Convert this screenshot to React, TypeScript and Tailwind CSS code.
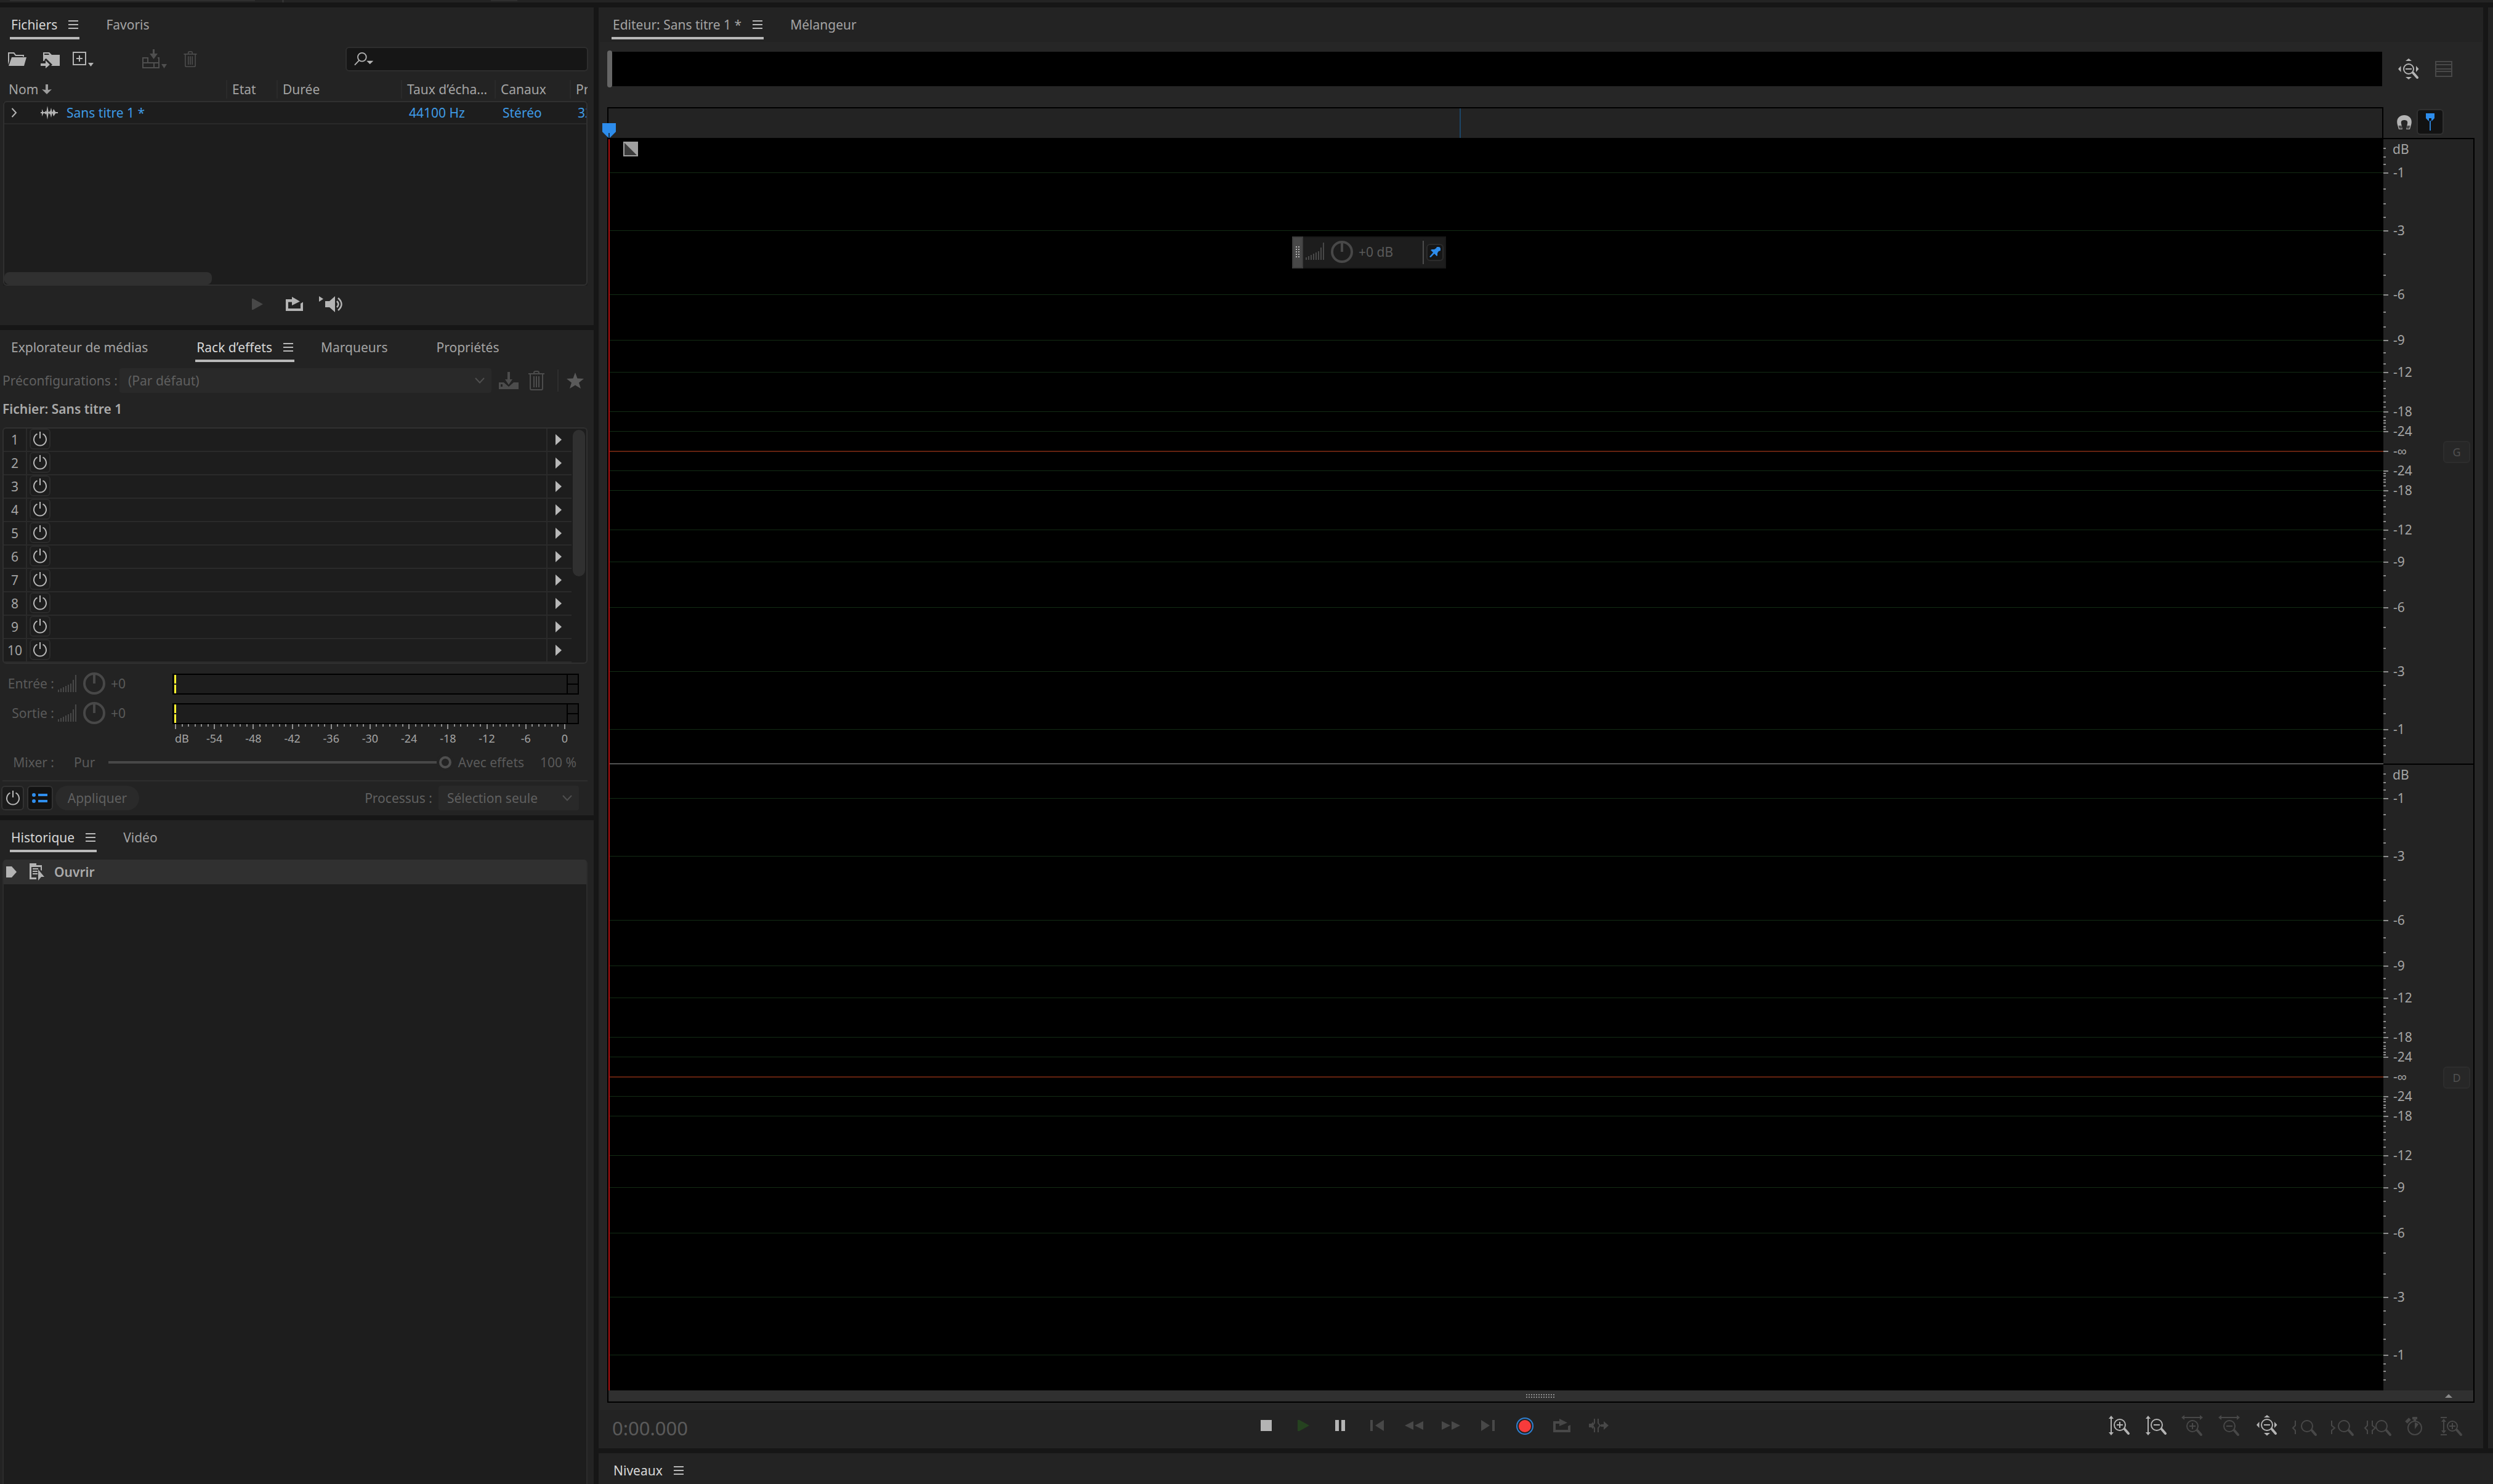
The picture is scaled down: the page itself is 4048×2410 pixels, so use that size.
import type { ReactNode } from "react";

/* ---------- shared pieces ---------- */

function Burger() {
  return (
    <svg width="16" height="14" viewBox="0 0 16 14" fill="currentColor" aria-hidden="true">
      <path d="M0 0h16v2H0zM0 6h16v2H0zM0 12h16v2H0z" />
    </svg>
  );
}

function Tab({ label, active = false, bright = false, underline = true }: { label: string; active?: boolean; bright?: boolean; underline?: boolean }) {
  return (
    <button
      type="button"
      className={`flex items-center gap-[18px] border-b-4 px-[2px] pb-[6px] leading-[28px] ${
        active && underline ? "border-[#b9b9b9]" : "border-transparent"
      } ${bright ? "text-[#d8d8d8]" : "text-[#a4a4a4]"}`}
    >
      <span>{label}</span>
      <span className={active ? "text-[#b9b9b9]" : "invisible"}>
        <Burger />
      </span>
    </button>
  );
}

function TabBar({ children, wide = false }: { children: ReactNode; wide?: boolean }) {
  return <nav className={`flex gap-[41px] pt-[14px] ${wide ? "pl-[21px]" : "pl-4"}`}>{children}</nav>;
}

function IconButton({ label, className = "", children }: { label: string; className?: string; children: ReactNode }) {
  return (
    <button type="button" aria-label={label} className={`flex shrink-0 items-center justify-center ${className}`}>
      {children}
    </button>
  );
}

function PowerIcon() {
  return (
    <svg width="24" height="26" viewBox="0 0 24 26" fill="none" stroke="#b8b8b8" strokeWidth="2" aria-hidden="true">
      <path d="M12 1v11M7.5 4.6a10 10 0 1 0 9 0" />
    </svg>
  );
}

function LevelBars() {
  return (
    <svg width="30" height="28" viewBox="0 0 30 28" fill="#484848" aria-hidden="true">
      <path d="M0 24h2v4H0zM4 22h2v6H4zM8 20h2v8H8zM12 18h2v10h-2zM16 16h2v12h-2zM20 14h2v14h-2zM24 8h2v20h-2zM28 0h2v28h-2z" />
    </svg>
  );
}

function Knob() {
  return (
    <svg width="36" height="36" viewBox="0 0 36 36" fill="none" stroke="#484848" strokeWidth="4" aria-hidden="true">
      <circle cx="18" cy="18" r="16" />
      <path d="M18 2v16" />
    </svg>
  );
}

function Chevron() {
  return (
    <svg width="16" height="10" viewBox="0 0 16 10" fill="none" stroke="#4f4f4f" strokeWidth="2" aria-hidden="true">
      <path d="M1 1l7 7.5L15 1" />
    </svg>
  );
}

function Dropdown({ id, value, className }: { id: string; value: string; className: string }) {
  return (
    <div className={`relative h-10 ${className}`}>
      <select id={id} className="h-full w-full appearance-none rounded bg-[#292929] pl-[14px] pr-10 text-[#606060]">
        <option>{value}</option>
      </select>
      <span className="pointer-events-none absolute right-[11px] top-[15px]">
        <Chevron />
      </span>
    </div>
  );
}

function TrashIcon() {
  return (
    <svg width="26" height="32" viewBox="0 0 26 32" fill="none" stroke="#4c4c4c" strokeWidth="2" aria-hidden="true">
      <path d="M0 5h26M9 5V3.5Q9 1 11.500 1h3Q17 1 17 3.500V5M3 5v23.500Q3 31 5 31h16q2 0 2-2.500V5M9 9v18M13 9v18M17 9v18" />
    </svg>
  );
}

function LoopIcon({ color }: { color: string }) {
  return (
    <svg width="28" height="24" viewBox="0 0 28 24" fill={color} aria-hidden="true">
      <path d="M0 4h10V0l13 7.500L10 14V8.500H4V19h20v-8l4-2.500V23H0z" />
    </svg>
  );
}

/* ---------- files panel ---------- */

function FilesPanel() {
  const columns: [string, string][] = [
    ["Nom", "w-[362px]"],
    ["Etat", "w-[82px]"],
    ["Durée", "w-[202px]"],
    ["Taux d’écha...", "w-[152px]"],
    ["Canaux", "w-[122px]"],
    ["Précision", ""],
  ];
  return (
    <section className="bg-[#232323]">
      <TabBar>
        <Tab label="Fichiers" active bright />
        <Tab label="Favoris" />
      </TabBar>
      <div className="mt-3 flex h-10 items-center pl-[13px] pr-[9px]">
        <IconButton label="Ouvrir un fichier">
          <svg width="30" height="22" viewBox="0 0 30 22" fill="#b4b4b4" aria-hidden="true">
            <path d="M0 20V0h10l3 4h13v3h-2V6H12L9 2H2v12z" />
            <path d="M6 8h24l-4 14H1z" />
          </svg>
        </IconButton>
        <IconButton label="Importer un fichier" className="ml-[22px] mt-1">
          <svg width="34" height="26" viewBox="0 0 34 26" fill="#b4b4b4" aria-hidden="true">
            <path d="M5 0h10l4 4h13v18H18l2-2-10-10-2 1-1 3H5zM7 2v2h8l-1-2z" fillRule="evenodd" />
            <path d="M1 18h8v-5l7 7-7 6v-4H1z" />
          </svg>
        </IconButton>
        <IconButton label="Nouveau fichier" className="ml-[18px]">
          <svg width="36" height="26" viewBox="0 0 36 26" fill="none" aria-hidden="true">
            <path d="M2 2h20v20H2zM12 7v10M7 12h10" stroke="#b4b4b4" strokeWidth="2" />
            <path d="M26 19h9l-4.500 6z" fill="#b4b4b4" />
          </svg>
        </IconButton>
        <IconButton label="Insérer dans un fichier multipiste" className="ml-[78px]">
          <svg width="40" height="32" viewBox="0 0 40 32" aria-hidden="true">
            <path d="M10 14H1v16h26V14h-2M1 22h26M9 14v8M19 22v8" fill="none" stroke="#4f4f4f" strokeWidth="2" />
            <path d="M17 0h3v7h5l-6.500 9L12 7h5zM31 24h9l-4.500 7z" fill="#4f4f4f" />
          </svg>
        </IconButton>
        <IconButton label="Supprimer" className="ml-[27px]">
          <svg width="22" height="26" viewBox="0 0 26 32" fill="none" stroke="#4c4c4c" strokeWidth="2" aria-hidden="true">
            <path d="M0 6h26M9 5V3.500Q9 1 11.500 1h3Q17 1 17 3.500V5M3 5v23.500Q3 31 5 31h16q2 0 2-2.500V5M9 10v17M13 10v17M17 10v17" />
          </svg>
        </IconButton>
        <label className="ml-auto flex h-10 w-[394px] items-center rounded-md border-2 border-[#2e2e2e] bg-[#161616] pl-3">
          <svg width="34" height="24" viewBox="0 0 34 24" fill="none" aria-hidden="true">
            <circle cx="14" cy="8.500" r="7.500" stroke="#b4b4b4" strokeWidth="2" />
            <path d="M9 14L1 22.500" stroke="#b4b4b4" strokeWidth="2" />
            <path d="M22 15h12l-6 6z" fill="#b4b4b4" />
          </svg>
          <input type="search" aria-label="Rechercher" className="w-full bg-transparent text-[#b4b4b4] outline-none" />
        </label>
      </div>
      <div className="relative ml-[5px] mr-[10px] mt-2 h-[340px] overflow-hidden bg-[#1d1d1d]">
        <table className="w-full table-fixed border-collapse text-left">
          <thead>
            <tr className="h-[41px] bg-[#232323] text-[#a4a4a4]">
              {columns.map(([name, width], i) => (
                <th key={name} className={`overflow-hidden whitespace-nowrap p-0 font-normal ${width}`}>
                  <span
                    className={`flex h-[30px] items-center ${i === 0 ? "gap-[6px] pl-[9px]" : "border-l-2 border-[#2a2a2a] pl-[8px]"}`}
                  >
                    {name}
                    {i === 0 && (
                      <svg width="16" height="16" viewBox="0 0 16 16" fill="#9c9c9c" aria-hidden="true">
                        <path d="M6 0h4v9l6-1-8 8-8-8 6 1z" />
                      </svg>
                    )}
                  </span>
                </th>
              ))}
            </tr>
          </thead>
          <tbody>
            <tr className="h-9 border-b-2 border-[#292929] text-[#3f9be6]">
              <td className="p-0">
                <span className="flex items-center pl-[13px]">
                  <svg width="10" height="16" viewBox="0 0 10 16" fill="none" stroke="#b4b4b4" strokeWidth="2" aria-hidden="true">
                    <path d="M1.500 1L8 8l-6.500 7" />
                  </svg>
                  <svg className="ml-[38px] mr-[14px]" width="28" height="22" viewBox="0 0 28 22" fill="#b4b4b4" aria-hidden="true">
                    <path d="M0 10h28v2H0zM2 5l3 6-3 6zM6 11l2-3 2 3-2 3zM9 11l2-11 2 11-2 11zM13 11l2-3 1 3-1 3zM15 11l2-8 2 8-2 8zM19 11l2-6 4 6-4 6z" />
                  </svg>
                  Sans titre 1 *
                </span>
              </td>
              <td />
              <td />
              <td className="p-0 pl-[13px]">44100 Hz</td>
              <td className="p-0 pl-[13px]">Stéréo</td>
              <td className="overflow-hidden whitespace-nowrap p-0 pl-[13px]">32 (flottant)</td>
            </tr>
          </tbody>
        </table>
        <div className="pointer-events-none absolute inset-x-0 bottom-0 top-10 rounded-md border-2 border-[#303030]" />
        <div className="absolute bottom-[2px] left-[2px] h-5 w-[337px] rounded-[8px] bg-[#303030]" />
      </div>
      <div className="flex h-16 justify-center pb-1 pr-2">
        <IconButton label="Lire" className="w-[60px]">
          <svg width="18" height="18" viewBox="0 0 18 18" fill="#484848" aria-hidden="true">
            <path d="M0 0h2l16 9-16 9H0z" />
          </svg>
        </IconButton>
        <IconButton label="Lecture en boucle" className="w-[60px]">
          <LoopIcon color="#b4b4b4" />
        </IconButton>
        <IconButton label="Lecture automatique" className="w-[60px]">
          <svg width="40" height="26" viewBox="0 0 40 26" aria-hidden="true">
            <path d="M0 0l7 4.500L0 9zM10 8h7l9-8v26l-9-8h-7z" fill="#b4b4b4" />
            <path d="M29 8q5 5 0 10M31 3q11 10 0 20" fill="none" stroke="#b4b4b4" strokeWidth="2.500" />
          </svg>
        </IconButton>
      </div>
    </section>
  );
}

/* ---------- effects rack panel ---------- */

const slots = [1, 2, 3, 4, 5, 6, 7, 8, 9, 10];
const meterLabels = ["dB", "-54", "-48", "-42", "-36", "-30", "-24", "-18", "-12", "-6", "0"];
const meterTicks = Array.from({ length: 61 }, (_, i) => i);

function GainRow({ label }: { label: string }) {
  return (
    <div className="flex h-9 items-center text-[#5a5a5a]">
      <span className="w-[88px] whitespace-nowrap text-right">{label}</span>
      <span className="ml-[6px]">
        <LevelBars />
      </span>
      <span className="ml-[11px]">
        <Knob />
      </span>
      <span className="ml-[9px] w-[100px]">+0</span>
      <div className="mr-6 flex h-[34px] flex-1 self-end border-2 border-black bg-[#1d1d1d]">
        <div className="ml-[1px] flex w-[3px] flex-col gap-[2px]">
          <div className="flex-1 bg-[#fff22d]" />
          <div className="flex-1 bg-[#fff22d]" />
        </div>
        <div className="ml-auto flex w-[18px] flex-col border-l-2 border-black">
          <div className="flex-1 border-b-2 border-black" />
          <div className="flex-1" />
        </div>
      </div>
    </div>
  );
}

function EffectsPanel() {
  return (
    <section className="bg-[#232323] pb-2">
      <TabBar>
        <Tab label="Explorateur de médias" />
        <Tab label="Rack d’effets" active bright />
        <Tab label="Marqueurs" />
        <Tab label="Propriétés" />
      </TabBar>
      <div className="mt-[10px] flex h-10 items-center pl-[4px] pr-4">
        <label htmlFor="preset" className="w-[190px] shrink-0 whitespace-nowrap text-[#606060]">
          Préconfigurations :
        </label>
        <Dropdown id="preset" value="(Par défaut)" className="flex-1" />
        <IconButton label="Enregistrer la préconfiguration" className="ml-3">
          <svg width="32" height="28" viewBox="0 0 32 28" fill="#4c4c4c" aria-hidden="true">
            <path d="M0 17h8l8 7 8-7h8v11H0zM3 20v4h3v-4z" fillRule="evenodd" />
            <path d="M14 0h4v12h4l-6 9-6-9h4z" />
          </svg>
        </IconButton>
        <IconButton label="Supprimer la préconfiguration" className="ml-4">
          <TrashIcon />
        </IconButton>
        <div className="ml-[21px] h-9 w-[2px] bg-[#2e2e2e]" />
        <IconButton label="Favori" className="ml-[13px]">
          <svg width="28" height="26" viewBox="0 0 28 26" fill="#5a5a5a" aria-hidden="true">
            <path d="M14 0l3.500 9.500L28 10l-8 6.500L23 26l-9-5.500L5 26l3-9.500L0 10l10.500-.5z" />
          </svg>
        </IconButton>
      </div>
      <h2 className="mt-3 pl-[4px] font-semibold leading-[28px] text-[#aaaaaa]">Fichier: Sans titre 1</h2>
      <div className="ml-[4px] mr-[10px] mt-4 flex rounded-md border-2 border-[#303030] bg-[#1d1d1d]">
        <ol className="flex-1">
          {slots.map((n) => (
            <li key={n} className="flex h-[38px] border-b-2 border-[#2a2a2a] text-[#a4a4a4]">
              <span className="w-[38px] border-r-2 border-[#2a2a2a] text-center leading-[36px]">{n}</span>
              <IconButton label={`Activer l’effet ${n}`} className="ml-[4px] h-[34px] w-[34px] rounded-md border-2 border-[#2b2b2b]">
                <PowerIcon />
              </IconButton>
              <span className="flex-1" />
              <IconButton label={`Choisir l’effet ${n}`} className="w-[41px] border-l-2 border-[#2a2a2a] pr-[3px]">
                <svg width="10" height="18" viewBox="0 0 10 18" fill="#b8b8b8" aria-hidden="true">
                  <path d="M0 0l10 9L0 18z" />
                </svg>
              </IconButton>
            </li>
          ))}
        </ol>
        <div className="mx-[2px] mt-[2px] h-[238px] w-5 rounded-full bg-[#303030]" />
      </div>
      <div className="mt-[14px] flex flex-col gap-3">
        <GainRow label="Entrée :" />
        <GainRow label="Sortie :" />
      </div>
      <div className="ml-[284px] mr-[46px]">
        <div className="flex h-2 justify-between">
          {meterTicks.map((i) => (
            <span key={i} className={`w-[2px] bg-[#8f8f8f] ${i % 6 === 0 ? "h-2" : "h-1"}`} />
          ))}
        </div>
        <div className="mt-[3px] flex justify-between text-[18px] leading-[24px] text-[#a4a4a4]">
          {meterLabels.map((t, i) => (
            <span key={t} className={`flex w-[2px] ${i === 0 ? "justify-start" : "justify-center"}`}>
              {t}
            </span>
          ))}
        </div>
      </div>
      <div className="mt-[11px] flex h-8 items-center whitespace-nowrap pr-[28px] text-[#5a5a5a]">
        <label htmlFor="mix" className="w-[88px] text-right">
          Mixer :
        </label>
        <span className="ml-8 w-[56px]">Pur</span>
        <input
          id="mix"
          type="range"
          defaultValue={100}
          className="h-5 flex-1 appearance-none bg-transparent [&::-webkit-slider-runnable-track]:h-1 [&::-webkit-slider-runnable-track]:bg-[#484848] [&::-webkit-slider-thumb]:-mt-2 [&::-webkit-slider-thumb]:h-5 [&::-webkit-slider-thumb]:w-5 [&::-webkit-slider-thumb]:appearance-none [&::-webkit-slider-thumb]:rounded-full [&::-webkit-slider-thumb]:border-4 [&::-webkit-slider-thumb]:border-[#4f4f4f] [&::-webkit-slider-thumb]:bg-[#232323] [&::-webkit-slider-thumb]:ring-4 [&::-webkit-slider-thumb]:ring-[#232323]"
        />
        <span className="ml-[11px]">Avec effets</span>
        <span className="ml-[26px]">100 %</span>
      </div>
      <div className="ml-1 mr-[10px] mt-[13px] h-[2px] bg-[#2e2e2e]" />
      <div className="mt-[7px] flex h-10 items-center pl-[2px] pr-6 text-[#606060]">
        <IconButton label="Activer le rack" className="h-10 w-[37px] rounded-md border-2 border-[#323232] bg-[#1b1b1b]">
          <PowerIcon />
        </IconButton>
        <IconButton label="Liste des effets" className="ml-[5px] h-10 w-[42px] rounded-md border-2 border-[#323232] bg-[#121212]">
          <svg width="26" height="18" viewBox="0 0 26 18" fill="#2f8eed" aria-hidden="true">
            <circle cx="3" cy="4" r="3" />
            <circle cx="3" cy="14" r="3" />
            <path d="M10 2h15v4H10zM10 12h15v4H10z" />
          </svg>
        </IconButton>
        <button type="button" className="ml-1 h-10 w-[136px] rounded-full bg-[#2a2a2a]">
          Appliquer
        </button>
        <label htmlFor="process" className="ml-auto mr-[10px] whitespace-nowrap">
          Processus :
        </label>
        <Dropdown id="process" value="Sélection seule" className="w-[228px]" />
      </div>
    </section>
  );
}

/* ---------- history panel ---------- */

function HistoryPanel() {
  return (
    <section className="flex flex-1 flex-col bg-[#232323]">
      <TabBar>
        <Tab label="Historique" active bright />
        <Tab label="Vidéo" />
      </TabBar>
      <div className="ml-1 mr-[10px] mt-3 flex-1 rounded-t-md border-x-2 border-[#2c2c2c] bg-[#1d1d1d]">
        <button type="button" className="flex h-10 w-full items-center rounded-t bg-[#303030] pl-1 font-semibold text-[#aaaaaa]">
          <svg width="17" height="18" viewBox="0 0 17 18" fill="#b4b4b4" aria-hidden="true">
            <path d="M0 0h9l8 9-8 9H0z" />
          </svg>
          <svg className="ml-[21px] mr-4" width="24" height="28" viewBox="0 0 24 28" aria-hidden="true">
            <path d="M0 0h11v3h9v9l-2-1V6H3v17h8v3H0zM5 8h9v2H5zM5 12h8v2H5zM5 16h8v2H5z" fill="#b4b4b4" />
            <path d="M14 10l10 12h-5l-5 6z" fill="#b4b4b4" />
          </svg>
          Ouvrir
        </button>
      </div>
    </section>
  );
}

/* ---------- editor panel ---------- */

const CHANNEL = 1016;
const CENTER = 507;
const halfMajors: [number, string][] = [
  [55, "-1"],
  [149, "-3"],
  [253, "-6"],
  [327, "-9"],
  [379, "-12"],
  [443, "-18"],
  [475, "-24"],
];
const halfMinors = [15, 29, 41, 81, 105, 127, 187, 221, 281, 305, 347, 365, 393, 405, 417, 427, 435, 451, 457, 461, 467, 471];
const majors: [number, string][] = [
  ...halfMajors,
  [CENTER, "-∞"],
  ...halfMajors.map(([y, t]): [number, string] => [CENTER * 2 - y, t]),
];
const minors = [...halfMinors, ...halfMinors.map((y) => CENTER * 2 - y)];
const pct = (y: number) => `${(y / CHANNEL) * 100}%`;

function Channel({ name, divider = false }: { name: string; divider?: boolean }) {
  return (
    <div className="flex flex-1">
      <div className="relative flex-1 bg-black">
        {majors.map(([y, t]) => (
          <div
            key={y}
            className={`absolute inset-x-0 ${t === "-∞" ? "h-[2px] bg-[#64220f]" : "h-px bg-[#132c14]"}`}
            style={{ top: pct(y - 1) }}
          />
        ))}
        {divider && <div className="absolute inset-x-0 bottom-[1px] h-px bg-[#9a9a9a]" />}
      </div>
      <div className="relative w-[146px] bg-[#232323] text-[#a4a4a4]">
        {minors.map((y) => (
          <div key={y} className="absolute left-0 h-[2px] w-1 bg-[#8f8f8f]" style={{ top: pct(y - 1) }} />
        ))}
        <span className="absolute left-[15px] top-[3px] leading-[26px]">dB</span>
        {majors.map(([y, t]) => (
          <div key={y} className="absolute left-0 flex h-[26px] items-center gap-2" style={{ top: pct(y - 13) }}>
            <div className="h-[2px] w-2 bg-[#8f8f8f]" />
            <span className="pb-[2px] leading-[24px]">{t}</span>
          </div>
        ))}
        <button
          type="button"
          className="absolute right-[5px] h-9 w-11 rounded-md border-2 border-[#2d2d2d] bg-[#272727] text-[18px] text-[#505050]"
          style={{ top: pct(490) }}
        >
          {name}
        </button>
        {divider && <div className="absolute inset-x-0 bottom-0 h-[2px] bg-black" />}
      </div>
    </div>
  );
}

function Lens({ x, y, r = 9, sign = "" }: { x: number; y: number; r?: number; sign?: string }) {
  return (
    <g fill="none" stroke="currentColor">
      <circle cx={x} cy={y} r={r} strokeWidth="2" />
      <path d={`M${x + r - 1} ${y + r - 2}L${x + 14} ${y + 14}`} strokeWidth="4" strokeLinecap="round" />
      {sign !== "" && <path d={`M${x - 5} ${y}h10`} strokeWidth="2" />}
      {sign === "+" && <path d={`M${x} ${y - 5}v10`} strokeWidth="2" />}
    </g>
  );
}

function ZoomAll() {
  return (
    <svg width="34" height="34" viewBox="0 0 34 34" fill="currentColor" aria-hidden="true">
      <Lens x={17} y={17} r={8} sign="-" />
      <path d="M12 4l5-4 5 4zM12 30l5 4 5-4zM4.500 12v10L0 17zM29 12v10l4.500-5z" />
    </svg>
  );
}

function VerticalArrow({ x, top = 0, bottom = 32 }: { x: number; top?: number; bottom?: number }) {
  return (
    <path
      fill="currentColor"
      d={`M${x - 4} ${top + 5}l4-5 4 5h-3v${bottom - top - 10}h3l-4 5-4-5h3V${top + 5}z`}
    />
  );
}

const zoomTools: { label: string; on?: boolean; icon: ReactNode }[] = [
  { label: "Zoom avant amplitude", on: true, icon: <><VerticalArrow x={7} top={2} bottom={34} /><Lens x={21} y={17} sign="+" /></> },
  { label: "Zoom arrière amplitude", on: true, icon: <><VerticalArrow x={7} top={2} bottom={34} /><Lens x={21} y={17} sign="-" /></> },
  { label: "Zoom avant temps", icon: <><path fill="currentColor" d="M1 5l5-4v3h25V1l5 4-5 4V6H6v3z" /><Lens x={19} y={19} sign="+" /></> },
  { label: "Zoom arrière temps", icon: <><path fill="currentColor" d="M1 5l5-4v3h25V1l5 4-5 4V6H6v3z" /><Lens x={19} y={19} sign="-" /></> },
  { label: "Zoom arrière complet", on: true, icon: <g transform="translate(3 1)"><Lens x={17} y={16} r={9} sign="-" /><path fill="currentColor" d="M12 4l5-4 5 4zM12 29l5 4.500 5-4.500zM4.500 11v10L0 16zM29 11v10l4.500-5z" /></g> },
  { label: "Zoom au point d’entrée", icon: <><path d="M6 10v8l-4 4 4 4v6" fill="none" stroke="currentColor" strokeWidth="2" /><Lens x={25} y={19} /></> },
  { label: "Zoom au point de sortie", icon: <><path d="M5 10v8l5 4-5 4v6" fill="none" stroke="currentColor" strokeWidth="2" /><Lens x={25} y={19} /></> },
  { label: "Zoom sur la sélection", icon: <><path d="M3 10v8l-4 4 4 4v6M11 10v8l5 4-5 4v6" fill="none" stroke="currentColor" strokeWidth="2" /><Lens x={26} y={19} /></> },
  { label: "Zoom temporisé", icon: <g fill="none" stroke="currentColor"><circle cx="20" cy="22" r="11" strokeWidth="2" /><path d="M20 13a10 10 0 0 1 6 3l-6 8z" fill="currentColor" stroke="none" /><path d="M20 4v8M16 6h8" strokeWidth="4" /><path d="M6 13l6-6" strokeWidth="5" /></g> },
  { label: "Réinitialiser le zoom", icon: <><path d="M2 5h10M2 33h10" stroke="currentColor" strokeWidth="2" /><VerticalArrow x={7} top={7} bottom={31} /><Lens x={21} y={19} r={8} sign="+" /></> },
];

const transport: { label: string; color: string; icon: ReactNode }[] = [
  { label: "Arrêter", color: "text-[#b4b4b4]", icon: <path d="M7 5h18v18H7z" /> },
  { label: "Lire", color: "text-[#25421f]", icon: <path d="M7 5h3l16 9-16 9H7z" /> },
  { label: "Pause", color: "text-[#b4b4b4]", icon: <path d="M8 5h6v18H8zM18 5h6v18h-6z" /> },
  { label: "Précédent", color: "text-[#484848]", icon: <path d="M5 5h4v18H5zM27 5v18l-14-9z" /> },
  { label: "Retour rapide", color: "text-[#484848]", icon: <path d="M15 7v14L1 14zM31 7v14l-14-7z" /> },
  { label: "Avance rapide", color: "text-[#484848]", icon: <path d="M1 7v14l14-7zM17 7v14l14-7z" /> },
  { label: "Suivant", color: "text-[#484848]", icon: <path d="M23 5h4v18h-4zM5 5v18l14-9z" /> },
  { label: "Enregistrer", color: "text-[#f73b3b]", icon: <><circle cx="16" cy="15" r="13" fill="none" stroke="#2f7fd0" strokeWidth="2" /><circle cx="16" cy="15" r="10" /></> },
  { label: "Boucle", color: "text-[#484848]", icon: <path d="M2 7h10V3l13 6.500L12 15v-4H6v10h20v-6l4-2v12H2z" /> },
  { label: "Ignorer la sélection", color: "text-[#484848]", icon: <><path d="M0 11h4l3-3v12l-3-3H0zM20 12h4V7l8 7-8 7v-5h-4l-2-2z" /><path d="M9 3v7l-3 4 3 4v7M15 3v7l3 4-3 4v7" fill="none" stroke="currentColor" strokeWidth="2" /></> },
];

function EditorPanel() {
  return (
    <section className="flex flex-1 flex-col bg-[#232323]">
      <TabBar wide>
        <Tab label="Editeur: Sans titre 1 *" active />
        <Tab label="Mélangeur" />
      </TabBar>
      <div className="mx-[2px] mt-1 flex flex-1 flex-col bg-[#262626] pb-3 pl-3 pr-3 pt-[14px]">
        <div className="flex h-[60px] items-center">
          <div className="h-full w-2 rounded-full bg-[#666]" />
          <div className="h-[56px] flex-1 bg-black" />
          <div className="flex w-[150px] items-center pl-[26px] text-[#b4b4b4]">
            <IconButton label="Zoom arrière complet">
              <ZoomAll />
            </IconButton>
            <IconButton label="Afficher la liste" className="ml-[26px]">
              <svg width="28" height="26" viewBox="0 0 28 26" fill="none" stroke="#484848" strokeWidth="2" aria-hidden="true">
                <path d="M1 1h26v24H1zM1 6h26M1 13h26M1 17h26" />
              </svg>
            </IconButton>
          </div>
        </div>
        <div className="mt-8 flex h-[50px]">
          <div className="relative flex-1 border-2 border-b-0 border-black bg-[#232323]">
            <div className="ml-[48%] h-full w-[2px] bg-[#1c4668]" />
            <svg className="absolute -left-[10px] bottom-0" width="22" height="24" viewBox="0 0 22 24" aria-hidden="true">
              <path d="M0 0h22v14L12 24h-2L0 14z" fill="#2d8ceb" />
              <path d="M11 16v8" stroke="#17324d" strokeWidth="2" />
            </svg>
          </div>
          <div className="flex w-[148px] items-start pl-[22px] pt-[3px]">
            <IconButton label="Magnétisme" className="mt-[10px]">
              <svg width="24" height="24" viewBox="0 0 24 24" aria-hidden="true">
                <path d="M1 16C-2 6 4 0 12 0s14 6 11 16l-2 7h-6l2-9c1-5-2-6-5-6s-6 1-5 6l2 9H3z" fill="#b4b4b4" />
                <path d="M2.500 17h5l1 5H4zM21.500 17h-5l-1 5H20z" fill="#4a4a4a" />
              </svg>
            </IconButton>
            <IconButton label="Marqueurs" className="ml-2 h-[42px] w-11 rounded-md border-2 border-[#303030] bg-[#121212]">
              <svg width="14" height="28" viewBox="0 0 14 28" aria-hidden="true">
                <path d="M0 0h14v8l-5 5v-5H5v5L0 8z" fill="#2d8ceb" />
                <path d="M7 12v16" stroke="#2d7fd0" strokeWidth="2" />
              </svg>
            </IconButton>
          </div>
        </div>
        <div className="flex flex-1 flex-col border-2 border-black">
          <div className="relative flex flex-1 flex-col">
            <Channel name="G" divider />
            <Channel name="D" />
            <div className="absolute inset-y-0 left-0 w-[2px] bg-[#b01212]" />
            <svg className="absolute left-6 top-1" width="24" height="24" viewBox="0 0 24 24" aria-hidden="true">
              <path d="M0 0h24v24H0z" fill="#a0a0a0" />
              <path d="M2 2l20 20H2z" fill="#3a3a3a" />
            </svg>
            <div className="absolute left-[1110px] top-[158px] flex h-[52px] w-[250px] items-center border-2 border-[#191919] bg-[#1d1d1d] text-[#5a5a5a]">
              <div className="-my-[2px] -ml-[2px] flex h-[52px] w-[18px] items-center justify-center border-2 border-[#3d3d3d] bg-[#484848]">
                <svg width="6" height="20" viewBox="0 0 6 20" stroke="#b4b4b4" strokeWidth="2" strokeDasharray="2 2" aria-hidden="true">
                  <path d="M1 0v20M5 0v20" />
                </svg>
              </div>
              <span className="mb-1 ml-1">
                <LevelBars />
              </span>
              <span className="mb-[2px] ml-[11px]">
                <Knob />
              </span>
              <span className="mb-[2px] ml-[9px] whitespace-nowrap">+0 dB</span>
              <div className="ml-auto h-[38px] w-[2px] bg-[#4c4c4c]" />
              <IconButton label="Épingler" className="ml-1 mr-[2px] h-7 w-7 rounded-md border-2 border-[#2c2c2c] bg-[#161616]">
                <svg width="18" height="18" viewBox="0 0 18 18" fill="#2d8ceb" aria-hidden="true">
                  <path d="M12 0h4l2 2v4l-3 1-2 3v4l-1 1-4-4-6 6-2-1 6-7-4-4 2-1h4l3-2z" />
                </svg>
              </IconButton>
            </div>
          </div>
          <div className="relative flex h-[18px] items-center justify-center bg-[#303030]">
            <svg width="48" height="6" viewBox="0 0 48 6" stroke="#8f8f8f" strokeWidth="2" strokeDasharray="2 2" aria-hidden="true">
              <path d="M0 1h48M0 5h48" />
            </svg>
            <svg className="absolute right-[34px] top-[6px]" width="12" height="6" viewBox="0 0 12 6" fill="#8a8a8a" aria-hidden="true">
              <path d="M0 6l6-6 6 6z" />
            </svg>
          </div>
        </div>
      </div>
      <div className="flex h-[62px] items-center pb-3">
        <div className="flex-[1051] basis-0 pl-[22px] pt-2 text-[31px] text-[#5a5a5a]">0:00.000</div>
        <div className="flex">
          {transport.map(({ label, color, icon }) => (
            <IconButton key={label} label={label} className={`w-[60px] ${color}`}>
              <svg width="32" height="28" viewBox="0 0 32 28" className="overflow-visible" fill="currentColor" aria-hidden="true">
                {icon}
              </svg>
            </IconButton>
          ))}
        </div>
        <div className="flex flex-[1409] basis-0 justify-end pr-[22px]">
          {zoomTools.map(({ label, on, icon }) => (
            <IconButton key={label} label={label} className={`w-[60px] ${on ? "text-[#b4b4b4]" : "text-[#484848]"}`}>
              <svg width="38" height="36" viewBox="0 0 38 36" className="overflow-visible" aria-hidden="true">
                {icon}
              </svg>
            </IconButton>
          ))}
        </div>
      </div>
    </section>
  );
}

export default function App() {
  return (
    <div className="flex h-screen flex-col overflow-hidden bg-[#161616] font-['Noto_Sans',sans-serif] text-[21px] leading-[28px]">
      <header className="flex h-1 bg-[#232323]">
        <div className="ml-4 h-[2px] w-[398px] bg-[#2f2f2f]" />
        <div className="ml-11 h-1 w-[3px] bg-[#323232]" />
        <div className="ml-[336px] h-[2px] w-[43px] bg-[#2f2f2f]" />
      </header>
      <main className="mt-2 grid min-h-0 flex-1 grid-cols-[minmax(0,964fr)_minmax(0,3060fr)_8px] gap-x-2">
        <div className="flex min-h-0 flex-col gap-2">
          <FilesPanel />
          <EffectsPanel />
          <HistoryPanel />
        </div>
        <div className="flex min-h-0 flex-col gap-2">
          <EditorPanel />
          <section className="-mr-4 h-[50px] bg-[#232323] pl-[1px]">
            <TabBar wide>
              <Tab label="Niveaux" active bright underline={false} />
            </TabBar>
          </section>
        </div>
        <aside className="mb-[58px] bg-[#232323]" />
      </main>
    </div>
  );
}
